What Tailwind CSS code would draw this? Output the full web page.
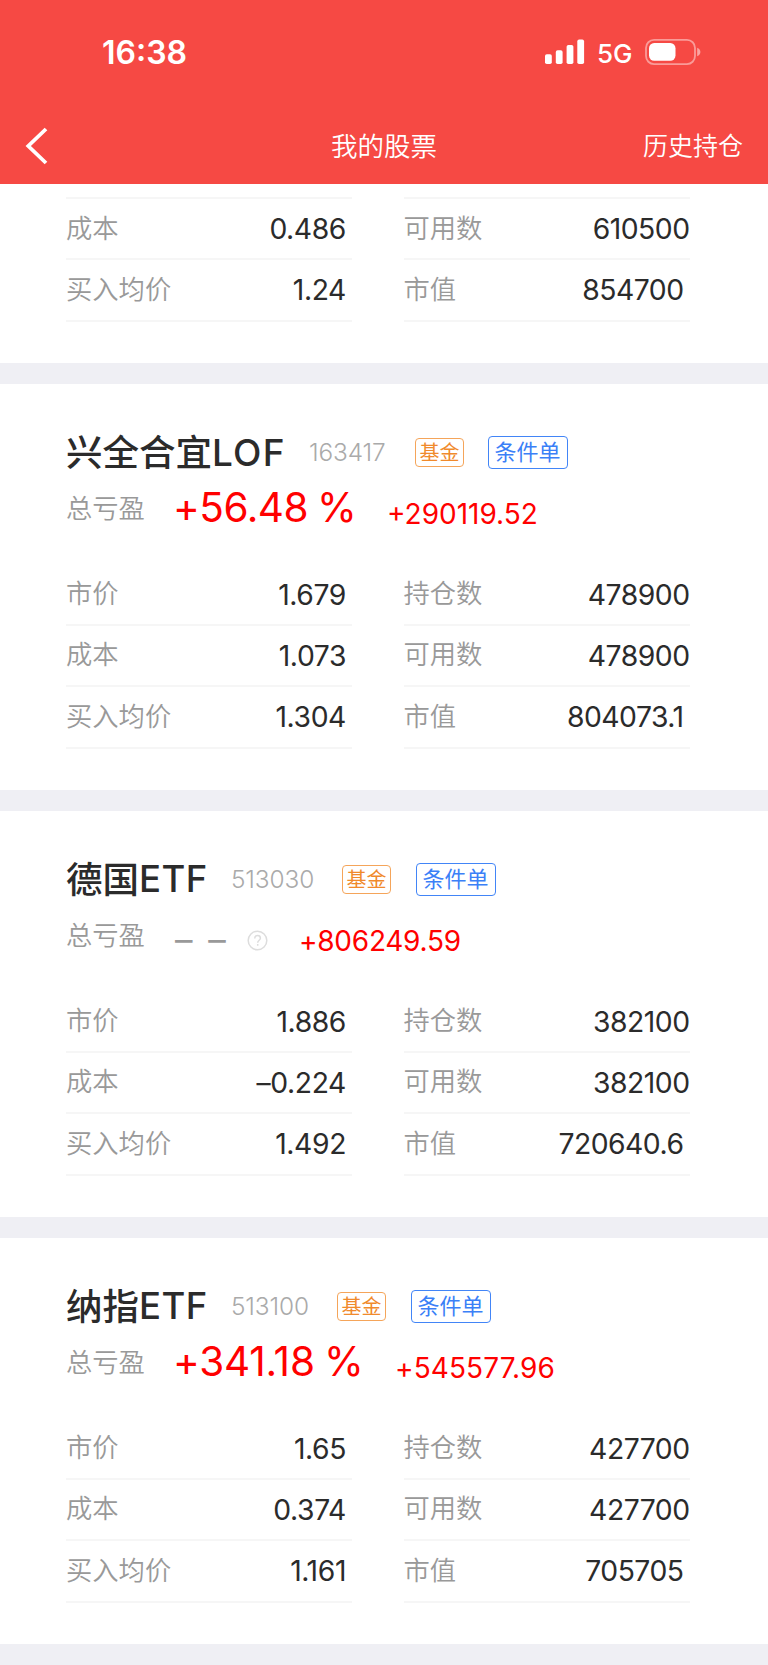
<!DOCTYPE html>
<html lang="zh-CN">
<head>
<meta charset="utf-8">
<meta name="viewport" content="width=device-width, initial-scale=1">
<title>我的股票</title>
<script src="https://cdn.jsdelivr.net/npm/@tailwindcss/browser@4"></script>
</head>
<body class="flex h-[1665px] w-[768px] flex-col overflow-hidden bg-white font-['Inter','Noto_Sans_CJK_SC',sans-serif] text-[#2b2b2b]">

<header class="flex h-[184px] shrink-0 flex-col bg-[#f64944] text-white">
  <div class="flex h-[104px] items-center justify-between pr-[66px] pl-[102px]">
    <span class="pt-[2px] text-[32px] leading-none font-semibold">16:38</span>
    <div class="flex items-center">
      <svg class="h-[26px] w-[40px]" viewBox="0 0 40 26" fill="#fff">
        <rect x="0" y="15.3" width="6.8" height="9.7" rx="1.8"/>
        <rect x="10.8" y="11.2" width="6.8" height="13.8" rx="1.8"/>
        <rect x="21.6" y="6" width="6.8" height="19" rx="1.8"/>
        <rect x="32.3" y="0.6" width="6.8" height="24.4" rx="1.8"/>
      </svg>
      <span class="ml-[12px] w-[48px] pt-[3px] text-[26px] leading-none font-medium">5G</span>
      <svg class="h-[26px] w-[57px]" viewBox="0 0 57 26">
        <rect x="1" y="0.9" width="49" height="24.2" rx="8" fill="none" stroke="#fff" stroke-opacity=".45" stroke-width="1.8"/>
        <rect x="4" y="4" width="26.5" height="17.8" rx="5.2" fill="#fff"/>
        <path d="M52.2 8.8c2 .8 3.2 2.4 3.2 4.200s-1.200 3.400-3.200 4.200z" fill="#fff" fill-opacity=".5"/>
      </svg>
    </div>
  </div>
  <div class="grid h-[80px] grid-cols-3 items-center pt-[3px] pr-[25px] pl-[25px] font-[350]">
    <svg class="h-[38px] w-[24px]" viewBox="0 0 24 38" fill="none" stroke="#fff" stroke-width="3.8"><path d="M21 2 3.300 19 21 36"/></svg>
    <h1 class="pt-px text-center text-[26.500px] leading-none">我的股票</h1>
    <span class="pt-px text-right text-[25px] leading-none">历史持仓</span>
  </div>
</header>

<main id="list" class="flex flex-col"></main>

<script>
const row = (l1, v1, l2, v2, last) => `
  <div class="grid h-[61.35px] grid-cols-[286px_286px] gap-x-[51.500px]">
    <div class="flex items-center justify-between border-b-2 border-[#f6f6f6] pr-[6px]">
      <span class="text-[26.300px] leading-none font-[350] text-[#999]">${l1}</span>
      <span class="pt-px text-[28.300px] leading-none tracking-[-0.4px]">${v1}</span>
    </div>
    <div class="flex items-center justify-between border-b-2 border-[#f6f6f6] ${last ? 'pr-[6px]' : ''}">
      <span class="text-[26.300px] leading-none font-[350] text-[#999]">${l2}</span>
      <span class="pt-px text-[28.300px] leading-none tracking-[-0.5px]">${v2}</span>
    </div>
  </div>`;

const divider = '<div class="h-[21px] shrink-0 bg-[#efeff4]"></div>';

const card = c => `
  <section class="h-[406px] pt-[48px] pl-[66px]">
    <div class="flex h-[40px] items-center">
      <h2 class="flex items-center pt-[2px] text-[36.500px] leading-none font-medium whitespace-nowrap ${c.nameW}">${c.name}<span class="pb-px ${c.latinCls}">${c.latin}</span></h2>
      <span class="pt-px text-[24.400px] leading-none font-light tracking-[-0.1px] text-[#aaa] ${c.codeW}">${c.code}</span>
      <span class="flex h-[29px] w-[49px] items-center justify-center rounded-[4px] border border-[#f5a55a] pt-px text-[20px] leading-none text-[#f08a2c] ${c.tagGap}">基金</span>
      <span class="flex h-[33px] w-[80px] items-center justify-center rounded-[4px] border border-[#4285f7] pr-px text-[22px] leading-none text-[#3b80f7]">条件单</span>
    </div>
    <div class="flex h-[92.500px] items-start pt-[17px]">
      <span class="flex h-[41px] w-[107px] items-center text-[26.300px] leading-none font-[350] text-[#999]">总亏盈</span>
      ${c.pct}
      <span class="mt-[4px] flex h-[41px] items-center text-[28px] leading-none text-[#f00] ${c.amtTrack}">${c.amount}</span>
    </div>
    ${row('市价', c.v[0], '持仓数', c.v[1])}
    ${row('成本', c.v[2], '可用数', c.v[3])}
    ${row('买入均价', c.v[4], '市值', c.v[5], true)}
  </section>${divider}`;

document.getElementById('list').innerHTML = `
  <section class="h-[179px] pt-[13px] pl-[66px]">
    <div class="grid h-[2px] grid-cols-[286px_286px] gap-x-[51.500px]"><i class="bg-[#f6f6f6]"></i><i class="bg-[#f6f6f6]"></i></div>
    ${row('成本', '0.486', '可用数', '610500')}
    ${row('买入均价', '1.24', '市值', '854700', true)}
  </section>${divider}`
+ card({
    name: '兴全合宜', latin: 'LOF', latinCls: 'text-[37px] tracking-[1.2px]', nameW: 'w-[243px]', code: '163417', codeW: 'w-[106px]', tagGap: 'mr-[24px]',
    pct: '<span class="flex h-[39px] w-[214px] items-center text-[40.500px] leading-none tracking-[-0.5px] [word-spacing:-2px] whitespace-pre text-[#f00]">+56.48 %</span>',
    amount: '+290119.52', amtTrack: '', v: ['1.679', '478900', '1.073', '478900', '1.304', '804073.1'] })
+ card({
    name: '德国', latin: 'ETF', latinCls: 'text-[36.500px] tracking-[0.4px]', nameW: 'w-[165px]', code: '513030', codeW: 'w-[111px]', tagGap: 'mr-[25px]',
    pct: `<span class="mt-[3px] flex h-[41px] w-[74px] items-center pl-[2px] text-[35px] leading-none [word-spacing:6px] whitespace-pre text-[#999]">– –</span>
      <svg class="mt-[14px] mr-[31px] h-[21px] w-[21px]" viewBox="0 0 21 21" fill="none" stroke="#ddd" stroke-width="1.500">
        <circle cx="10.500" cy="10.500" r="9.300"/>
        <path d="M7.700 8.500c0-1.800 1.200-2.900 2.900-2.900s2.800 1.100 2.800 2.600c0 2-2.700 2.200-2.700 4.500M10.700 14v1.800"/>
      </svg>`,
    amount: '+806249.59', amtTrack: 'tracking-[-0.25px]', v: ['1.886', '382100', '–0.224', '382100', '1.492', '720640.6'] })
+ card({
    name: '纳指', latin: 'ETF', latinCls: 'text-[36.500px] tracking-[0.4px]', nameW: 'w-[165px]', code: '513100', codeW: 'w-[106px]', tagGap: 'mr-[25px]',
    pct: '<span class="flex h-[39px] w-[222px] items-center text-[40.500px] leading-none tracking-[-0.15px] [word-spacing:-2px] whitespace-pre text-[#f00]">+341.18 %</span>',
    amount: '+545577.96', amtTrack: 'tracking-[0.1px]', v: ['1.65', '427700', '0.374', '427700', '1.161', '705705'] });
</script>
</body>
</html>
